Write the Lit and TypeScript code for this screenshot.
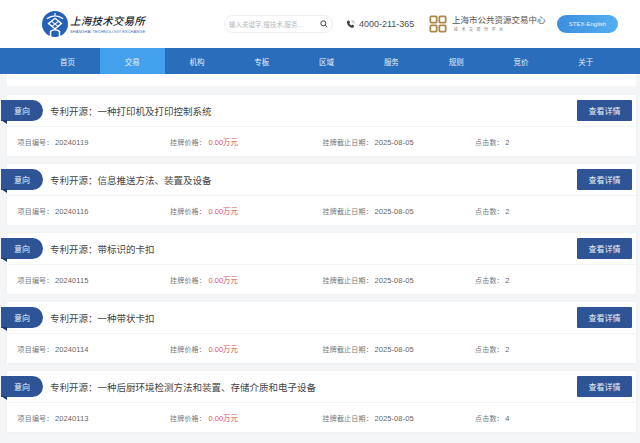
import { LitElement, html, css, svg } from "lit";
import { customElement } from "lit/decorators.js";

const NAV = ["首页", "交易", "机构", "专板", "区域", "服务", "规则", "竞价", "关于"];
const ITEMS = [
  ["一种打印机及打印控制系统", "20240119", "2"],
  ["信息推送方法、装置及设备", "20240116", "2"],
  ["带标识的卡扣", "20240115", "2"],
  ["一种带状卡扣", "20240114", "2"],
  ["一种后厨环境检测方法和装置、存储介质和电子设备", "20240113", "4"],
];

const logo = svg`<svg class="logo-mark" viewBox="0 0 32 32" width="26" height="26">
  <circle cx="16" cy="16" r="16" fill="#2460b8"/>
  <path d="M6 9.500q10-7 20 0" fill="none" stroke="#fff" stroke-width="1.700"/>
  <path d="M16 2.500v3" stroke="#fff" stroke-width="1.500"/>
  <path d="M16 9l8 6.500-8 6.500-8-6.500z" fill="none" stroke="#fff" stroke-width="1.700"/>
  <path d="M11.500 12.500l9 7M20.500 12.500l-9 7" stroke="#fff" stroke-width="1.300"/>
  <path d="M10.500 32V25q5.500-4 11 0V32" fill="none" stroke="#fff" stroke-width="1.900"/>
</svg>`;

const phone = svg`<svg viewBox="0 0 16 16" width="9" height="9">
  <path d="M3 1.500 5.600 1l1.600 3.600-1.500 1.300c.7 1.700 2 3 3.700 3.800l1.300-1.500 3.600 1.600-.5 2.700c-.2.9-1 1.500-1.900 1.400C6.400 13.400 2 9 1.600 3.400 1.500 2.500 2.100 1.700 3 1.500z" fill="#3c4048"/>
  <path d="M10 3.200a2.800 2.800 0 0 1 2.800 2.800M10 .8A5.200 5.200 0 0 1 15.200 6" fill="none" stroke="#8a9098" stroke-width="1"/>
</svg>`;

const search = svg`<svg viewBox="0 0 12 12" width="8" height="8">
  <circle cx="5" cy="5" r="3.800" fill="none" stroke="#333" stroke-width="1.400"/>
  <path d="M8 8l3 3" stroke="#333" stroke-width="1.400"/>
</svg>`;

const squares = svg`<svg viewBox="0 0 20 20" width="18" height="18">
  <g fill="none" stroke="#a88a4a" stroke-width="2">
    <rect x="1.500" y="1.500" width="7" height="7" rx="1"/>
    <rect x="11.500" y="1.500" width="7" height="7" rx="1"/>
    <rect x="1.500" y="11.500" width="7" height="7" rx="1"/>
    <rect x="11.500" y="11.500" width="7" height="7" rx="1"/>
  </g>
</svg>`;

@customElement("app-root")
export class AppRoot extends LitElement {
  static styles = css`
    :host {
      display: block;
      width: 640px;
      height: 443px;
      overflow: hidden;
      background: #f4f5f6;
      font-family: "Liberation Sans", "Noto Sans CJK SC", sans-serif;
      color: #555;
    }
    .header {
      height: 48px;
      background: #fff;
      display: flex;
      align-items: center;
    }
    .brand {
      display: flex;
      align-items: center;
      gap: 2px;
      margin-left: 42px;
      width: 182px;
      flex: none;
    }
    .logo-mark { flex: none; display: block; }
    .brand-text { display: flex; flex-direction: column; width: 76px; }
    .brand-cn {
      font-size: 10.500px;
      line-height: 15px;
      letter-spacing: 0.200px;
      color: #26262c;
      font-style: italic;
      font-weight: 500;
      white-space: nowrap;
    }
    .brand-en {
      font-size: 4.100px;
      line-height: 5px;
      color: #3a70bb;
      white-space: nowrap;
    }
    .search {
      width: 109px;
      height: 18px;
      box-sizing: border-box;
      border: 1px solid #eee;
      border-radius: 9px;
      display: flex;
      align-items: center;
      justify-content: space-between;
      padding: 0 3px 0 4px;
      flex: none;
    }
    .search span { font-size: 6.500px; color: #b4b8bd; white-space: nowrap; }
    .search svg { display: block; margin-right: 1px; }
    .tel {
      margin-left: 13px;
      display: flex;
      align-items: center;
      gap: 4px;
      font-size: 9px;
      color: #4a4d52;
      flex: none;
      width: 83px;
      white-space: nowrap;
    }
    .tel svg { display: block; flex: none; }
    .center {
      display: flex;
      align-items: center;
      gap: 5px;
      flex: none;
      width: 128px;
    }
    .center svg { display: block; flex: none; }
    .center-text { display: flex; flex-direction: column; }
    .center-cn { font-size: 8.500px; line-height: 11px; color: #55504a; white-space: nowrap; }
    .center-sub { font-size: 4px; line-height: 8px; margin-left: 2px; letter-spacing: 3.500px; color: #77726c; white-space: nowrap; }
    .lang {
      width: 61px;
      height: 18px;
      flex: none;
      border-radius: 9px;
      background: linear-gradient(90deg, #3d8de0, #55b0ee);
      color: #e8f4ff;
      font-size: 6px;
      display: flex;
      align-items: center;
      justify-content: center;
    }
    .nav {
      height: 26px;
      background: #2a6dbb;
      display: flex;
      padding-left: 35px;
    }
    .nav a {
      width: 64.800px;
      flex: none;
      display: flex;
      align-items: center;
      justify-content: center;
      color: #e6effa;
      font-size: 7.500px;
    }
    .nav a.on { background: #43a0ec; }
    .strip { height: 12px; background: #fff; margin: 0 4px 0 7px; }
    .list {
      padding: 9px 4px 0 7px;
      display: flex;
      flex-direction: column;
      gap: 8px;
    }
    .card {
      background: #fff;
      height: 61px;
      box-sizing: border-box;
      position: relative;
      box-shadow: 0 0 3px rgba(0, 0, 0, 0.04);
    }
    .top {
      height: 32px;
      display: flex;
      align-items: center;
      border-bottom: 1px solid #f3f3f3;
      box-sizing: border-box;
      padding: 0 4px 0 43px;
    }
    .tag {
      position: absolute;
      left: -6px;
      top: 5px;
      width: 42px;
      height: 21px;
      background: #2f5496;
      border-radius: 0 11px 11px 0;
      color: #f0f4fa;
      font-size: 8px;
      display: flex;
      align-items: center;
      justify-content: center;
    }
    .tag::after {
      content: "";
      position: absolute;
      left: 0;
      top: 20px;
      border-top: 4px solid #1f3c70;
      border-left: 6px solid transparent;
    }
    .title { font-size: 9.500px; color: #444; flex: 1; white-space: nowrap; }
    .btn {
      width: 55px;
      height: 21px;
      border-radius: 1px;
      background: #2f5496;
      color: #eef2f8;
      font-size: 8px;
      display: flex;
      align-items: center;
      justify-content: center;
      flex: none;
    }
    .bottom {
      display: grid;
      grid-template-columns: 152.500px 152.500px 152.500px 1fr;
      height: 29px;
      align-items: center;
      padding-left: 10.500px;
      font-size: 7px;
      letter-spacing: 0.200px;
      color: #777;
      white-space: nowrap;
    }
    .bottom b { font-weight: 400; font-size: 7.500px; letter-spacing: 0.100px; margin-left: 1.500px; color: #666; }
    .bottom .price { color: #e0525a; margin-left: 2.500px; font-size: 7.500px; letter-spacing: 0; }
  `;

  render() {
    return html`
      <div class="header">
        <div class="brand">
          ${logo}
          <div class="brand-text">
            <div class="brand-cn">上海技术交易所</div>
            <div class="brand-en">SHANGHAI TECHNOLOGY EXCHANGE</div>
          </div>
        </div>
        <div class="search"><span>输入关键字,搜技术,服务...</span>${search}</div>
        <div class="tel">${phone}<span>4000-211-365</span></div>
        <div class="center">
          ${squares}
          <div class="center-text">
            <div class="center-cn">上海市公共资源交易中心</div>
            <div class="center-sub">技术交易分平台</div>
          </div>
        </div>
        <div class="lang">STEX-English</div>
      </div>
      <div class="nav">
        ${NAV.map((n, i) => html`<a class=${i === 1 ? "on" : ""}>${n}</a>`)}
      </div>
      <div class="strip"></div>
      <div class="list">
        ${ITEMS.map(
          ([t, id, c]) => html`
            <div class="card">
              <div class="tag">意向</div>
              <div class="top">
                <div class="title">专利开源：${t}</div>
                <div class="btn">查看详情</div>
              </div>
              <div class="bottom">
                <div>项目编号：<b>${id}</b></div>
                <div>挂牌价格：<span class="price">0.00万元</span></div>
                <div>挂牌截止日期：<b>2025-08-05</b></div>
                <div>点击数：<b>${c}</b></div>
              </div>
            </div>
          `
        )}
      </div>
    `;
  }
}
